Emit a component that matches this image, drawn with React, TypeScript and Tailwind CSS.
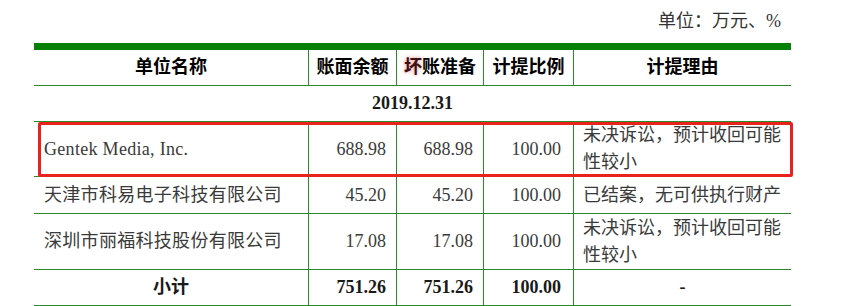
import React from "react";

const body = "font-['Liberation_Serif','Noto_Sans_CJK_SC',serif]";
const head = "font-['Liberation_Serif','Noto_Sans_CJK_SC',sans-serif]";

const cols = ["w-[275px]", "w-[88px]", "w-[87px]", "w-[90px]", "w-[217px]"];

type Row = {
  name: string;
  a: string;
  b: string;
  c: string;
  reason: string[];
  h: string;
  box?: boolean;
};

const rows: Row[] = [
  { name: "Gentek Media, Inc.", a: "688.98", b: "688.98", c: "100.00", reason: ["未决诉讼，预计收回可能", "性较小"], h: "h-[55px]", box: true },
  { name: "天津市科易电子科技有限公司", a: "45.20", b: "45.20", c: "100.00", reason: ["已结案，无可供执行财产"], h: "h-[37px]" },
  { name: "深圳市丽福科技股份有限公司", a: "17.08", b: "17.08", c: "100.00", reason: ["未决诉讼，预计收回可能", "性较小"], h: "h-[56px]" },
];

export default function App() {
  return (
    <div className={`w-[862px] h-[306px] bg-white overflow-hidden ${body}`}>
      <div className="pt-[7px] h-[43px] text-right pr-[81px] text-[18px] leading-[28px] text-[#333]">
        单位：万元、%
      </div>
      <div className="ml-[34px] w-[757px]">
        <div className="h-[7px] bg-[#078007]" />
        {/* header */}
        <div className={`flex h-[36px] border-b border-[#2a8a2a] ${head} font-bold text-[18px] text-black`}>
          {["单位名称", "账面余额", "", "计提比例", "计提理由"].map((t, i) => (
            <div
              key={i}
              className={`${cols[i]} flex items-center justify-center ${i < 4 ? "border-r border-[#2a8a2a]" : ""}`}
            >
              {i === 2 ? (
                <span>
                  <span className="text-[#3a1010] [text-shadow:0_0_3px_#f3a5a5,0_0_5px_#f7c0c0]">坏</span>账准备
                </span>
              ) : (
                t
              )}
            </div>
          ))}
        </div>
        {/* date row */}
        <div className="flex h-[36px] items-center justify-center border-b border-[#2a8a2a] font-bold text-[18px] text-[#1a1a1a]">
          2019.12.31
        </div>
        {rows.map((r, ri) => (
          <div key={ri} className={`relative flex ${r.h} border-b border-[#2a8a2a] text-[18px] text-[#3a3a3a]`}>
            <div className={`${cols[0]} flex items-center pl-[10px] border-r border-[#2a8a2a] tracking-[0.3px]`}>
              {r.name}
            </div>
            <div className={`${cols[1]} flex items-center justify-end pr-[10px] border-r border-[#2a8a2a]`}>{r.a}</div>
            <div className={`${cols[2]} flex items-center justify-end pr-[10px] border-r border-[#2a8a2a]`}>{r.b}</div>
            <div className={`${cols[3]} flex items-center justify-end pr-[12px] border-r border-[#2a8a2a]`}>{r.c}</div>
            <div className={`${cols[4]} flex flex-col justify-center pl-[9px] leading-[27px]`}>
              {r.reason.map((l, li) => (
                <div key={li}>{l}</div>
              ))}
            </div>
            {r.box && (
              <div className="absolute left-[4px] right-[-2px] top-0 bottom-[-1px] border-[3px] border-[#e8231c] rounded-[2px]" />
            )}
          </div>
        ))}
        {/* subtotal */}
        <div className="flex h-[36px] border-b border-[#2a8a2a] font-bold text-[18px] text-[#1a1a1a]">
          <div className={`${cols[0]} flex items-center justify-center border-r border-[#2a8a2a] ${head}`}>小计</div>
          <div className={`${cols[1]} flex items-center justify-end pr-[10px] border-r border-[#2a8a2a]`}>751.26</div>
          <div className={`${cols[2]} flex items-center justify-end pr-[10px] border-r border-[#2a8a2a]`}>751.26</div>
          <div className={`${cols[3]} flex items-center justify-end pr-[12px] border-r border-[#2a8a2a]`}>100.00</div>
          <div className={`${cols[4]} flex items-center justify-center`}>-</div>
        </div>
      </div>
    </div>
  );
}
